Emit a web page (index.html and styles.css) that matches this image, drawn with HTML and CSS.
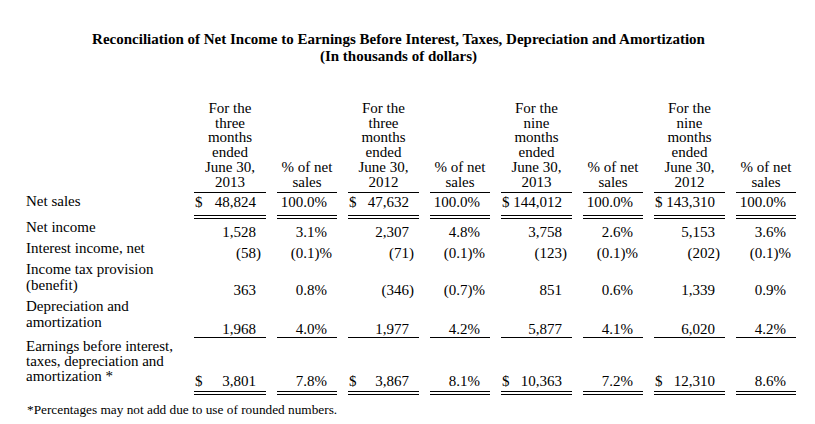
FILE: index.html
```html
<!DOCTYPE html>
<html>
<head>
<meta charset="utf-8">
<link rel="stylesheet" href="styles.css">
</head>
<body>
<div class="page">
  <h1 class="title">Reconciliation of Net Income to Earnings Before Interest, Taxes, Depreciation and Amortization<br>(In thousands of dollars)</h1>
  <table class="recon">
    <colgroup>
      <col class="w-lbl"><col class="w-amt1"><col class="w-pct"><col class="w-amt"><col class="w-pct"><col class="w-amt"><col class="w-pct"><col class="w-amt"><col class="w-pct">
    </colgroup>
    <thead>
      <tr>
        <th class="lbl"></th>
        <th class="first"><div class="hc">For the<br>three<br>months<br>ended<br>June 30,<br>2013</div></th>
        <th><div class="hc">% of net<br>sales</div></th>
        <th><div class="hc">For the<br>three<br>months<br>ended<br>June 30,<br>2012</div></th>
        <th><div class="hc">% of net<br>sales</div></th>
        <th><div class="hc">For the<br>nine<br>months<br>ended<br>June 30,<br>2013</div></th>
        <th><div class="hc">% of net<br>sales</div></th>
        <th><div class="hc">For the<br>nine<br>months<br>ended<br>June 30,<br>2012</div></th>
        <th><div class="hc">% of net<br>sales</div></th>
      </tr>
    </thead>
    <tbody>
      <tr class="r-sales">
        <td class="lbl">Net sales</td>
        <td class="first"><div class="c dbl"><span class="cur">$</span>48,824</div></td>
        <td><div class="c dbl">100.0%</div></td>
        <td><div class="c dbl"><span class="cur">$</span>47,632</div></td>
        <td><div class="c dbl">100.0%</div></td>
        <td><div class="c dbl"><span class="cur">$</span>144,012</div></td>
        <td><div class="c dbl">100.0%</div></td>
        <td><div class="c dbl"><span class="cur">$</span>143,310</div></td>
        <td><div class="c dbl">100.0%</div></td>
      </tr>
      <tr class="r-ni">
        <td class="lbl">Net income</td>
        <td class="first"><div class="c">1,528</div></td>
        <td><div class="c">3.1%</div></td>
        <td><div class="c">2,307</div></td>
        <td><div class="c">4.8%</div></td>
        <td><div class="c">3,758</div></td>
        <td><div class="c">2.6%</div></td>
        <td><div class="c">5,153</div></td>
        <td><div class="c">3.6%</div></td>
      </tr>
      <tr class="r-int">
        <td class="lbl">Interest income, net</td>
        <td class="first"><div class="c neg">(58)</div></td>
        <td><div class="c neg">(0.1)%</div></td>
        <td><div class="c neg">(71)</div></td>
        <td><div class="c neg">(0.1)%</div></td>
        <td><div class="c neg">(123)</div></td>
        <td><div class="c neg">(0.1)%</div></td>
        <td><div class="c neg">(202)</div></td>
        <td><div class="c neg">(0.1)%</div></td>
      </tr>
      <tr class="r-tax">
        <td class="lbl">Income tax provision (benefit)</td>
        <td class="first"><div class="c">363</div></td>
        <td><div class="c">0.8%</div></td>
        <td><div class="c neg">(346)</div></td>
        <td><div class="c neg">(0.7)%</div></td>
        <td><div class="c">851</div></td>
        <td><div class="c">0.6%</div></td>
        <td><div class="c">1,339</div></td>
        <td><div class="c">0.9%</div></td>
      </tr>
      <tr class="r-dep">
        <td class="lbl">Depreciation and amortization</td>
        <td class="first"><div class="c sgl">1,968</div></td>
        <td><div class="c sgl">4.0%</div></td>
        <td><div class="c sgl">1,977</div></td>
        <td><div class="c sgl">4.2%</div></td>
        <td><div class="c sgl">5,877</div></td>
        <td><div class="c sgl">4.1%</div></td>
        <td><div class="c sgl">6,020</div></td>
        <td><div class="c sgl">4.2%</div></td>
      </tr>
      <tr class="r-ebitda">
        <td class="lbl">Earnings before interest, taxes, depreciation and amortization *</td>
        <td class="first"><div class="c dbl"><span class="cur">$</span>3,801</div></td>
        <td><div class="c dbl">7.8%</div></td>
        <td><div class="c dbl"><span class="cur">$</span>3,867</div></td>
        <td><div class="c dbl">8.1%</div></td>
        <td><div class="c dbl"><span class="cur">$</span>10,363</div></td>
        <td><div class="c dbl">7.2%</div></td>
        <td><div class="c dbl"><span class="cur">$</span>12,310</div></td>
        <td><div class="c dbl">8.6%</div></td>
      </tr>
    </tbody>
  </table>
  <p class="note">*Percentages may not add due to use of rounded numbers.</p>
</div>
</body>
</html>
```

FILE: styles.css
```css
html, body {
  margin: 0;
  padding: 0;
  background: #fff;
}
body {
  margin: 8px;
  color: #000;
  font-family: "Liberation Serif", "Times New Roman", serif;
}
.page {
  width: 799px;
}
.title {
  width: 781px;
  margin: 23px 0 0 0;
  font-size: 15px;
  line-height: 17px;
  font-weight: bold;
  text-align: center;
}
.recon {
  margin: 36px 0 0 18px;
  border-collapse: separate;
  border-spacing: 0;
  table-layout: fixed;
  width: 770px;
  font-size: 15px;
  line-height: 16px;
}
.w-lbl { width: 157px; }
.w-amt1 { width: 83px; }
.w-amt { width: 82px; }
.w-pct { width: 71px; }

.recon th,
.recon td {
  padding: 0 0 0 11px;
  vertical-align: bottom;
  font-weight: normal;
}
.recon th.lbl,
.recon td.lbl {
  padding: 0 4px 5px 0;
  vertical-align: top;
  text-align: left;
}
.hc {
  line-height: 14.7px;
  text-align: center;
  padding-bottom: 3px;
  border-bottom: 1px solid #000;
}
.c {
  display: flex;
  justify-content: flex-end;
  padding-right: 10px;
  white-space: nowrap;
}
.c.neg {
  padding-right: 5px;
}
.cur {
  margin-right: auto;
  padding-left: 1px;
}
.c.dbl {
  border-bottom: 4px double #000;
}
.c.sgl {
  border-bottom: 1px solid #000;
}
.r-sales td { padding-top: 1px; }
.r-sales td.lbl { padding-bottom: 5px; }
.r-sales .c { padding-bottom: 5px; }
.recon .r-dep td.lbl { padding-bottom: 8px; }
.recon .r-ebitda td.lbl {
  padding-top: 1px;
  padding-bottom: 11px;
  line-height: 15px;
}
.r-ebitda .c { padding-bottom: 2px; }
.note {
  margin: 7px 0 0 19px;
  font-size: 13.3px;
  line-height: 16px;
}
```
